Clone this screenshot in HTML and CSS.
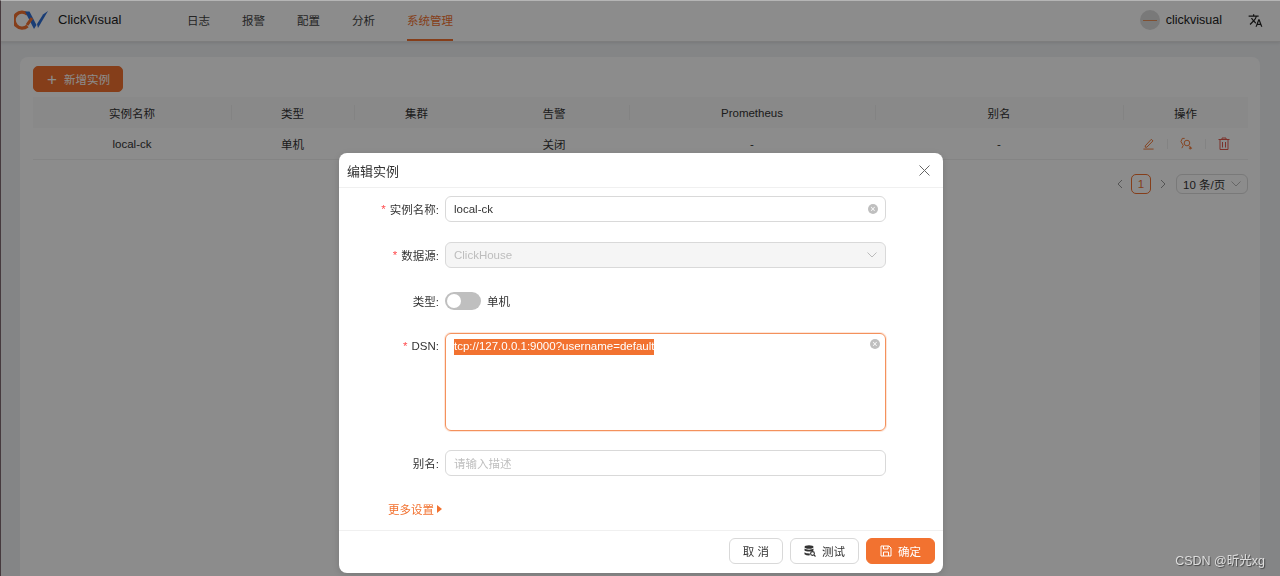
FILE: index.html
```html
<!DOCTYPE html>
<html lang="zh-CN">
<head>
<meta charset="utf-8">
<title>ClickVisual</title>
<link rel="stylesheet" href="styles.css">
</head>
<body>
<div class="page">
  <header class="topbar">
    <div class="brand">
      <svg class="logo" width="36" height="22" viewBox="0 0 36 22" fill="none">
        <path d="M13.5 5.2A8 8 0 1 0 13.5 17" stroke="#f27230" stroke-width="3.4"/>
        <path d="M11 2.5H15.5L22.5 16L20 20Z" fill="#2f6fd6"/>
        <path d="M13 16C15 13 17 10.5 18 9" stroke="#f27230" stroke-width="3"/>
        <path d="M24 19L34 2L29 5.5L23 15Z" fill="#2f6fd6"/>
      </svg>
      <span class="brand-name">ClickVisual</span>
    </div>
    <nav class="nav">
      <a class="nav-item">日志</a>
      <a class="nav-item">报警</a>
      <a class="nav-item">配置</a>
      <a class="nav-item">分析</a>
      <a class="nav-item active">系统管理</a>
    </nav>
    <div class="user">
      <span class="avatar"><span class="avatar-dash"></span></span>
      <span class="user-name">clickvisual</span>
      <svg class="lang" width="15" height="15" viewBox="0 0 24 24" fill="#222"><path d="M12.87 15.07l-2.54-2.51.03-.03A17.5 17.5 0 0 0 14.07 6H17V4h-7V2H8v2H1v2h11.17C11.5 7.92 10.44 9.75 9 11.35 8.07 10.32 7.3 9.19 6.69 8h-2c.73 1.63 1.73 3.17 2.98 4.56l-5.09 5.02L4 19l5-5 3.11 3.11.76-2.04zM18.5 10h-2L12 22h2l1.12-3h4.75L21 22h2l-4.5-12zm-2.62 7l1.62-4.33L19.12 17h-3.24z"/></svg>
    </div>
  </header>
  <main class="content">
    <section class="card">
      <button class="add-btn"><span class="plus">+</span><span>新增实例</span></button>
      <div class="table">
        <div class="tr th">
          <div class="c c1">实例名称</div><div class="c c2">类型</div><div class="c c3">集群</div><div class="c c4">告警</div><div class="c c5">Prometheus</div><div class="c c6">别名</div><div class="c c7">操作</div>
        </div>
        <div class="tr td">
          <div class="c c1">local-ck</div><div class="c c2">单机</div><div class="c c3"></div><div class="c c4">关闭</div><div class="c c5">-</div><div class="c c6">-</div>
          <div class="c c7 actions">
            <svg width="13" height="13" viewBox="0 0 14 14" fill="none" stroke="#f27230" stroke-width="1"><path d="M3.5 9.5L10 2.5L11.8 4.2L5.2 11H3.5ZM1.5 13H12.5"/></svg>
            <i class="sep"></i>
            <svg width="13" height="13" viewBox="0 0 14 14" fill="none" stroke="#f27230" stroke-width="1"><circle cx="7.5" cy="6.5" r="3"/><path d="M5 1.5L2.5 1.5L1 5L3.5 9L2 12M10 9.5L12 12M11 10.5V13.5M9.5 12H13"/></svg>
            <i class="sep"></i>
            <svg width="12" height="13" viewBox="0 0 12 13" fill="none" stroke="#e25a4e" stroke-width="1"><path d="M.5 2.5H11.5M4 2.5V1H8V2.5M2 2.5V12.5H10V2.5M4.5 5V10.5M7.5 5V10.5"/></svg>
          </div>
        </div>
      </div>
      <div class="pager">
        <span class="arrow">
          <svg width="8" height="10" viewBox="0 0 8 10" fill="none" stroke="#999"><path d="M6 1L2 5L6 9"/></svg>
        </span>
        <span class="page-num">1</span>
        <span class="arrow">
          <svg width="8" height="10" viewBox="0 0 8 10" fill="none" stroke="#999"><path d="M2 1L6 5L2 9"/></svg>
        </span>
        <span class="page-size">10 条/页
          <svg width="10" height="6" viewBox="0 0 10 6" fill="none" stroke="#bbb"><path d="M.5 .5L5 5L9.5 .5"/></svg>
        </span>
      </div>
    </section>
  </main>
</div>

<div class="mask"></div>

<div class="watermark">CSDN @昕光xg</div>

<div class="modal">
  <div class="modal-head">
    <span class="modal-title">编辑实例</span>
    <svg width="11" height="11" viewBox="0 0 11 11" fill="none" stroke="#666" stroke-width="1"><path d="M.5 .5L10.5 10.5M10.5 .5L.5 10.5"/></svg>
  </div>
  <div class="modal-body">
    <div class="row">
      <label class="lab"><b>*</b>实例名称:</label>
      <div class="input">local-ck<span class="clear"></span></div>
    </div>
    <div class="row">
      <label class="lab"><b>*</b>数据源:</label>
      <div class="input disabled">ClickHouse
        <svg width="10" height="6" viewBox="0 0 10 6" fill="none" stroke="#bbb"><path d="M.5 .5L5 5L9.5 .5"/></svg>
      </div>
    </div>
    <div class="row">
      <label class="lab">类型:</label>
      <div class="switch-wrap"><span class="switch"><span class="knob"></span></span><span>单机</span></div>
    </div>
    <div class="row row-area">
      <label class="lab"><b>*</b>DSN:</label>
      <div class="textarea"><span class="selected">tcp://127.0.0.1:9000?username=default</span><span class="clear clear-area"></span></div>
    </div>
    <div class="row">
      <label class="lab">别名:</label>
      <div class="input placeholder">请输入描述</div>
    </div>
    <div class="more">更多设置<span class="caret"></span></div>
  </div>
  <div class="modal-foot">
    <button class="btn">取 消</button>
    <button class="btn">
      <svg width="12" height="12" viewBox="0 0 12 12" fill="#333"><ellipse cx="5" cy="2" rx="4.5" ry="1.8"/><path d="M.5 3.6C2 5 8 5 9.500 3.600V5.500C8 6.800 2 6.800 .5 5.500ZM.5 7.200C2 8.400 4 8.500 5.500 8.300L6 10.300C4 10.600 2 10.200 .5 9.200Z"/><circle cx="8.500" cy="8.500" r="1.900" fill="none" stroke="#333" stroke-width="1.100"/><path d="M10 10L11.500 11.500" stroke="#333" stroke-width="1.100"/></svg>
      <span>测试</span>
    </button>
    <button class="btn primary">
      <svg width="12" height="12" viewBox="0 0 12 12" fill="none" stroke="#fff"><path d="M1 1H9L11 3V11H1ZM3.500 1V4H8V1M3.500 11V7H8.500V11"/></svg>
      <span>确定</span>
    </button>
  </div>
</div>
</body>
</html>
```
FILE: styles.css
```css
* { box-sizing: border-box; }
html, body { margin: 0; height: 100%; overflow: hidden; }
body {
  font-family: "Liberation Sans", "Noto Sans CJK SC", sans-serif;
  font-size: 11.5px;
  color: #333;
  background: #f0f2f5;
}
.page { height: 576px; display: flex; flex-direction: column; }

.topbar {
  height: 42px;
  flex: none;
  background: #fff;
  border-bottom: 1px solid #e4e4e4;
  box-shadow: 0 1px 3px rgba(0,0,0,.1);
  display: flex;
  align-items: center;
  padding-left: 14px;
}
.brand { display: flex; align-items: center; width: 173px; }
.logo { margin-right: 8px; margin-top: -2px; }
.brand-name { font-size: 13px; color: #222; margin-top: -2px; }
.nav { display: flex; gap: 32px; height: 100%; }
.nav-item { display: flex; align-items: center; color: #444; padding-bottom: 1px; }
.nav-item.active { color: #f27230; border-bottom: 2px solid #f27230; padding-bottom: 0; }
.user { margin-left: auto; display: flex; align-items: center; padding-right: 17px; margin-top: -1px; }
.avatar {
  width: 20px; height: 20px; border-radius: 50%; background: #ddd;
  display: flex; align-items: center; justify-content: center;
}
.avatar-dash { width: 14px; height: 1px; background: #e8905a; }
.user-name { font-size: 12.500px; color: #222; margin-left: 6px; }
.lang { margin-left: 26px; }

.content { flex: 1; padding: 15px 20px 0; min-height: 0; }
.card {
  height: 100%;
  background: #fff;
  border-radius: 8px 8px 0 0;
  padding: 9px 12px 0 13px;
}
.add-btn {
  width: 90px; height: 26px;
  border: 1px solid #f27230;
  border-radius: 5px;
  background: #f27230;
  color: #fff;
  font: inherit;
  padding: 0 0 0 13px;
  display: flex; align-items: center; gap: 7px;
}
.plus { font-size: 17px; line-height: 1; font-weight: 400; }

.table { margin-top: 5px; }
.tr { display: grid; grid-template-columns: 198px 123px 125px 150px 246px 248px 125px; }
.th { height: 31px; background: #fafafa; font-weight: 400; color: #333; }
.td { height: 32px; border-bottom: 1px solid #f0f0f0; }
.c { display: flex; align-items: center; justify-content: center; position: relative; }
.th .c + .c::before {
  content: ""; position: absolute; left: 0; top: 8px; height: 15px; width: 1px; background: #eee;
}
.th .c4::before { background: transparent !important; }
.actions { gap: 12px; padding-left: 1px; }
.sep { width: 1px; height: 10px; background: #eee; }

.pager { display: flex; align-items: center; justify-content: flex-end; margin-top: 14px; height: 20px; }
.arrow { width: 17px; display: flex; justify-content: center; }
.page-num {
  width: 20px; height: 20px; margin: 0 3px; border: 1px solid #f27230; border-radius: 5px;
  color: #f27230; display: flex; align-items: center; justify-content: center;
}
.page-size {
  width: 72px; height: 20px; margin-left: 5px; border: 1px solid #ddd; border-radius: 6px;
  display: flex; align-items: center; justify-content: space-between; padding: 0 6px 0 6px;
  color: #333;
}

.mask {
  position: fixed; inset: 0;
  background: rgba(0,0,0,.45);
  border-top: 1px solid #b5b5b5;
  border-left: 1px solid #463a3e;
}
.watermark {
  position: fixed; right: 15px; top: 550px;
  color: #ddd;
  font-size: 12.500px;
  text-shadow: 1px 1px 1px rgba(0,0,0,.5);
}

.modal {
  position: fixed; left: 339px; top: 153px; width: 604px; height: 420px;
  background: #fff; border-radius: 8px;
  box-shadow: 0 2px 8px rgba(0,0,0,.15);
  display: flex; flex-direction: column;
}
.modal-head {
  height: 35px; flex: none; border-bottom: 1px solid #f0f0f0;
  display: flex; align-items: center; justify-content: space-between;
  padding: 0 13px 0 8px;
}
.modal-title { font-size: 13px; color: #333; }
.modal-body { flex: 1; padding-top: 8px; }
.row {
  display: grid; grid-template-columns: 100px 441px; column-gap: 6px; margin-bottom: 20px;
  align-items: center; height: 26px;
}
.row-area { height: 98px; align-items: start; margin-bottom: 19px; margin-top: -1px; }
.row-area .lab { height: 26px; }
.lab { display: flex; align-items: center; justify-content: flex-end; color: #333; font-weight: 400; }
.lab b { color: #ff4d4f; font-weight: 400; font-family: "Liberation Sans", sans-serif; margin-right: 4px; }
.input {
  height: 26px; border: 1px solid #d9d9d9; border-radius: 6px; padding: 0 8px;
  display: flex; align-items: center; justify-content: space-between; color: #333;
}
.input.disabled { background: #f5f5f5; color: #bdbdbd; }
.placeholder { color: #bfbfbf; }
.clear {
  width: 10px; height: 10px; border-radius: 50%; background: #bfbfbf; position: relative; margin-right: -1px;
}
.clear::before {
  content: "×"; position: absolute; inset: 0; color: #fff; font-size: 9px; line-height: 10px; text-align: center;
}
.switch-wrap { display: flex; align-items: center; gap: 6px; }
.switch { width: 36px; height: 18px; border-radius: 9px; background: #bfbfbf; display: flex; align-items: center; padding-left: 2px; }
.knob { width: 14px; height: 14px; border-radius: 50%; background: #fff; }
.textarea {
  height: 98px; border: 1px solid #f4915c; border-radius: 6px; padding: 5px 8px 0;
  box-shadow: 0 0 0 1px rgba(242,114,48,.18);
  position: relative; line-height: 15px;
}
.selected { background: #f27230; color: #fff; display: inline-block; height: 16px; line-height: 15px; }
.clear-area { position: absolute; right: 6px; top: 5px; }
.more { color: #f27230; margin-left: 49px; height: 26px; display: flex; align-items: center; margin-top: 0; }
.caret {
  margin-left: 3px; width: 0; height: 0;
  border-left: 5px solid #f27230; border-top: 4px solid transparent; border-bottom: 4px solid transparent;
}
.modal-foot {
  height: 43px; flex: none; border-top: 1px solid #f0f0f0;
  display: flex; justify-content: flex-end; align-items: center; gap: 7px; padding: 0 8px 2px 0;
}
.btn {
  height: 26px; padding: 0 13px; border: 1px solid #d9d9d9; border-radius: 6px; background: #fff;
  font: inherit; color: #333; display: flex; align-items: center; gap: 6px;
}
.btn.primary { background: #f27230; border-color: #f27230; color: #fff; }
```
